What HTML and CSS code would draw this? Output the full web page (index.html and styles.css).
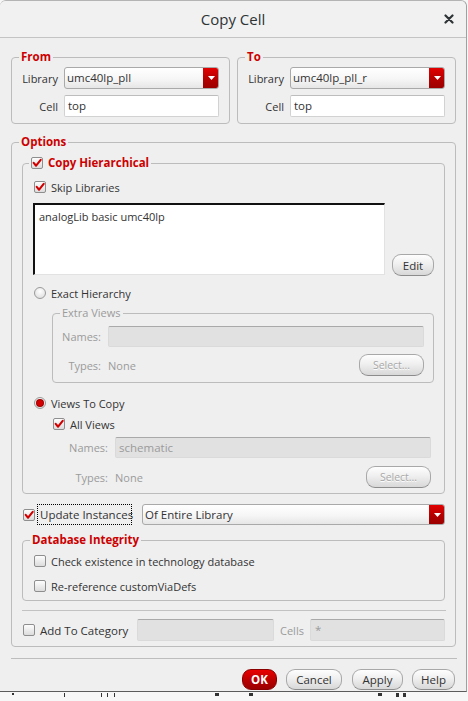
FILE: index.html
```html
<!DOCTYPE html>
<html>
<head>
<meta charset="utf-8">
<title>Copy Cell</title>
<link rel="stylesheet" href="styles.css">
</head>
<body>
<div class="window">
  <header class="titlebar">
    <span></span>
    <span class="title">Copy Cell</span>
    <span class="close"><svg width="10" height="10" viewBox="0 0 10 10"><path d="M1.5 1.5 L8.5 8.5 M8.5 1.5 L1.5 8.5" stroke="#2e3436" stroke-width="2.2" stroke-linecap="round"/></svg></span>
  </header>
  <div class="content">
    <div class="fromto">
      <section class="group">
        <div class="gtitle red">From</div>
        <div class="form">
          <span class="lbl">Library</span>
          <div class="combo"><span class="combo-text">umc40lp_pll</span><span class="combo-btn"><svg width="7" height="4" viewBox="0 0 7 4"><path d="M0 0 H7 L3.5 4 Z" fill="#fff"/></svg></span></div>
          <span class="lbl">Cell</span>
          <div class="field">top</div>
        </div>
      </section>
      <section class="group">
        <div class="gtitle red">To</div>
        <div class="form">
          <span class="lbl">Library</span>
          <div class="combo"><span class="combo-text">umc40lp_pll_r</span><span class="combo-btn"><svg width="7" height="4" viewBox="0 0 7 4"><path d="M0 0 H7 L3.5 4 Z" fill="#fff"/></svg></span></div>
          <span class="lbl">Cell</span>
          <div class="field">top</div>
        </div>
      </section>
    </div>

    <section class="group options">
      <div class="gtitle red">Options</div>
      <div class="options-body">
        <section class="group">
          <div class="gtitle ch-title"><span class="cb"><svg width="10" height="10" viewBox="0 0 10 10"><path d="M1.7 4.9 L4.1 7.7 L8.7 1.9" fill="none" stroke="#d00000" stroke-width="2.1" stroke-linecap="round" stroke-linejoin="round"/></svg></span><span class="red">Copy Hierarchical</span></div>
          <div class="ch-body">
            <div class="row"><span class="cb"><svg width="10" height="10" viewBox="0 0 10 10"><path d="M1.7 4.9 L4.1 7.7 L8.7 1.9" fill="none" stroke="#d00000" stroke-width="2.1" stroke-linecap="round" stroke-linejoin="round"/></svg></span><span>Skip Libraries</span></div>
            <div class="libs">
              <div class="textarea">analogLib basic umc40lp</div>
              <button class="btn edit">Edit</button>
            </div>
            <div class="row radio-row"><span class="radio"></span><span>Exact Hierarchy</span></div>
            <section class="group extra">
              <div class="gtitle gray">Extra Views</div>
              <div class="vgrid extra-grid">
                <span class="lbl gray">Names:</span>
                <div class="field disabled wide"></div>
                <span class="lbl gray">Types:</span>
                <span class="gray">None</span>
                <button class="btn dis">Select...</button>
              </div>
            </section>
            <div class="row views-row"><span class="radio on"></span><span>Views To Copy</span></div>
            <div class="row allviews"><span class="cb"><svg width="10" height="10" viewBox="0 0 10 10"><path d="M1.7 4.9 L4.1 7.7 L8.7 1.9" fill="none" stroke="#d00000" stroke-width="2.1" stroke-linecap="round" stroke-linejoin="round"/></svg></span><span>All Views</span></div>
            <div class="vgrid views-grid">
              <span class="lbl gray">Names:</span>
              <div class="field disabled wide">schematic</div>
              <span class="lbl gray">Types:</span>
              <span class="gray">None</span>
              <button class="btn dis">Select...</button>
            </div>
          </div>
        </section>

        <div class="update">
          <span class="cb"><svg width="10" height="10" viewBox="0 0 10 10"><path d="M1.7 4.9 L4.1 7.7 L8.7 1.9" fill="none" stroke="#d00000" stroke-width="2.1" stroke-linecap="round" stroke-linejoin="round"/></svg></span>
          <span class="focus">Update Instances</span>
          <div class="combo update-combo"><span class="combo-text">Of Entire Library</span><span class="combo-btn"><svg width="7" height="4" viewBox="0 0 7 4"><path d="M0 0 H7 L3.5 4 Z" fill="#fff"/></svg></span></div>
        </div>

        <section class="group db">
          <div class="gtitle red">Database Integrity</div>
          <div class="db-body">
            <div class="row"><span class="cb"></span><span>Check existence in technology database</span></div>
            <div class="row"><span class="cb"></span><span>Re-reference customViaDefs</span></div>
          </div>
        </section>

        <div class="sep"></div>

        <div class="addrow">
          <span class="cb"></span>
          <span class="add-label">Add To Category</span>
          <div class="field disabled cat"></div>
          <span class="gray cells">Cells</span>
          <div class="field disabled cellsfield">*</div>
        </div>
      </div>
    </section>
  </div>

  <div class="sep2"></div>

  <div class="buttons">
    <button class="btn ok">OK</button>
    <button class="btn cancel">Cancel</button>
    <button class="btn apply">Apply</button>
    <button class="btn help">Help</button>
  </div>
</div>
<div class="desktop">
  <i class="m m1"></i><i class="m m2"></i><i class="m m3"></i><i class="m m4"></i><i class="m m5"></i><i class="m m6"></i><i class="m m7"></i><i class="m m8"></i><i class="m m9"></i><i class="m m10"></i>
</div>
</body>
</html>
```

FILE: styles.css
```css
* { box-sizing: border-box; }

body {
  margin: 0;
  width: 468px;
  height: 701px;
  overflow: hidden;
  background: #f6f6f6;
  font-family: "Open Sans", "Noto Sans", sans-serif;
  font-size: 11px;
  color: #333;
}

.window {
  width: 467px;
  background: #efefef;
  border-top: 1px solid #b4b4b4;
  border-right: 1px solid #a0a0a0;
  border-bottom: 1px solid #5c5c5c;
  border-radius: 6px 6px 0 0;
  padding-bottom: 1px;
}

.titlebar {
  height: 37px;
  border-bottom: 1px solid #c4c4c4;
  display: grid;
  grid-template-columns: 1fr auto 1fr;
  align-items: center;
  background: #f1f1f1;
  border-radius: 6px 6px 0 0;
}

.title {
  font-size: 15px;
  color: #2e3436;
}

.close {
  justify-self: end;
  margin-right: 12px;
  display: flex;
}

.content {
  padding: 0 10px 0 11px;
}

.fromto {
  display: flex;
  gap: 7px;
  margin-top: 19px;
}

.fromto .group { flex: 1; }

.group {
  border: 1px solid #bcbcbc;
  border-radius: 4px;
}

.gtitle {
  margin: -9px 0 0 7px;
  padding: 0 2px;
  height: 16px;
  line-height: 16px;
  background: #efefef;
  width: fit-content;
  display: flex;
  align-items: center;
  gap: 5px;
}

.red { color: #cc0000; font-weight: bold; font-size: 11.5px; }
.gray { color: #9b9b9b; }

.form {
  display: grid;
  grid-template-columns: 46px 1fr;
  gap: 6px;
  padding: 2px 10px 6px 0;
  align-items: center;
}

.lbl { text-align: right; }

.combo {
  height: 22px;
  display: flex;
  border: 1px solid #a9a9a9;
  border-radius: 3px;
  background: linear-gradient(#ffffff, #f6f6f6 55%, #e6e6e6);
  overflow: hidden;
}

.combo-text {
  flex: 1;
  padding-left: 2px;
  line-height: 20px;
  white-space: nowrap;
  font-size: 11.5px;
}

.combo-btn {
  width: 16px;
  margin: -1px -1px -1px 0;
  border-radius: 0 3px 3px 0;
  background: linear-gradient(#e60000, #b00000 60%, #9a0000);
  display: flex;
  align-items: center;
  justify-content: center;
}

.field {
  height: 22px;
  border: 1px solid #d2d2d2;
  border-top-color: #bdbdbd;
  border-radius: 2px;
  background: #fff;
  padding-left: 3px;
  line-height: 20px;
  font-size: 11.5px;
}

.field.disabled {
  height: 21px;
  background: #e1e1e1;
  border-color: #dadada;
  border-top-color: #a9a9a9;
  color: #9b9b9b;
  line-height: 19px;
}

.options { margin-top: 18px; }

.options-body {
  padding: 13px 10px 5px 10px;
}

.ch-title { margin-left: 6px; }

.ch-body {
  padding: 8px 10px 5px 10px;
}

.row {
  display: flex;
  align-items: center;
  height: 16px;
  gap: 5px;
}

.row .cb, .row .radio { margin-left: 1px; }

.cb {
  width: 12px;
  height: 12px;
  flex: none;
  border: 1px solid #8e8e8e;
  border-radius: 2px;
  background: linear-gradient(#fdfdfd, #dcdcdc);
  display: flex;
  align-items: center;
  justify-content: center;
}

.radio {
  width: 12px;
  height: 12px;
  flex: none;
  border: 1px solid #9a9a9a;
  border-radius: 50%;
  background: radial-gradient(circle at 50% 35%, #ffffff, #d8d8d8);
  display: flex;
  align-items: center;
  justify-content: center;
}

.radio.on::after {
  content: "";
  width: 6px;
  height: 6px;
  border-radius: 50%;
  background: #d40000;
  box-shadow: 0 0 0 1px #a00000;
}

.libs {
  display: flex;
  align-items: flex-end;
  gap: 7px;
  margin-top: 8px;
}

.textarea {
  width: 352px;
  height: 72px;
  background: #fff;
  border-top: 2px solid #111;
  border-left: 2px solid #111;
  border-right: 1px solid #e2e2e2;
  border-bottom: 1px solid #e2e2e2;
  padding: 4px 4px;
  line-height: 16px;
}

.btn {
  height: 22px;
  border: 1px solid #a8a8a8;
  border-bottom-color: #8c8c8c;
  border-radius: 9px;
  background: linear-gradient(#fefefe, #efefef 45%, #d8d8d8);
  font: inherit;
  font-size: 11.5px;
  color: #333;
  padding: 0;
}

.edit { width: 42px; margin-bottom: -1px; }

.radio-row { margin-top: 10px; }

.extra { margin: 12px 0 0 19px; }

.vgrid {
  display: grid;
  align-items: center;
  column-gap: 7px;
}

.vgrid .wide { grid-column: 2 / 4; }

.extra-grid {
  grid-template-columns: 48px 1fr auto;
  row-gap: 7px;
  padding: 5px 9px 6px 0;
}

.btn.dis {
  width: 65px;
  color: #a8a8a8;
  text-shadow: 0 1px 0 #fff;
  font-size: 10.5px;
}

.views-row { margin-top: 12px; }

.allviews { margin: 5px 0 0 19px; }

.views-grid {
  grid-template-columns: 56px 1fr auto;
  row-gap: 8px;
  margin: 5px 0 0 19px;
  padding-right: 3px;
}

.update {
  display: flex;
  align-items: center;
  height: 21px;
  margin-top: 10px;
}

.update .cb { margin-left: 1px; }

.focus {
  margin-left: 2px;
  width: 95px;
  height: 21px;
  border: 1px dotted #000;
  padding: 0 2px;
  line-height: 19px;
  white-space: nowrap;
  font-size: 11.5px;
}

.update-combo {
  flex: 1;
  height: 21px;
  margin-left: 10px;
}

.update-combo .combo-text { line-height: 19px; }

.db { margin-top: 15px; }
.db .gtitle { margin-left: 7px; }

.db-body {
  padding: 5px 10px 6px 10px;
  display: flex;
  flex-direction: column;
  gap: 9px;
}

.sep {
  height: 1px;
  background: #c2c2c2;
  margin: 9px -1px 0 0;
}

.addrow {
  display: flex;
  align-items: center;
  height: 22px;
  margin-top: 8px;
}

.addrow .cb { margin-left: 1px; }

.add-label {
  margin-left: 5px;
  width: 97px;
  white-space: nowrap;
  font-size: 11.5px;
}

.field.cat {
  width: 137px;
  height: 22px;
}

.cells { margin-left: 6px; }

.field.cellsfield {
  flex: 1;
  height: 22px;
  margin-left: 6px;
  padding-left: 4px;
}

.sep2 {
  height: 1px;
  background: #bdbdbd;
  margin: 11px 9px 0 11px;
}

.buttons {
  display: flex;
  justify-content: flex-end;
  gap: 9px;
  margin-top: 10px;
  padding-right: 11px;
  height: 21px;
}

.buttons .btn { height: 21px; }

.ok {
  width: 35px;
  background: linear-gradient(#ea0000, #b80000 55%, #9c0000);
  border-color: #8a0000;
  color: #fff;
  font-weight: bold;
}

.cancel { width: 56px; }
.apply { width: 51px; margin-left: 1px; }
.help { width: 43px; }

.desktop {
  height: 9px;
  overflow: hidden;
  background: #f7f7f7;
  display: flex;
  align-items: flex-start;
}

.m {
  display: block;
  height: 4px;
  width: 1px;
  background: #333;
  margin-top: 1px;
}

.m1 { margin-left: 12px; width: 2px; height: 2px; }
.m2 { margin-left: 50px; }
.m3 { margin-left: 36px; }
.m4 { margin-left: 5px; }
.m5 { margin-left: 6px; }
.m6 { margin-left: 100px; width: 4px; height: 3px; }
.m7 { margin-left: 30px; width: 4px; height: 3px; }
.m8 { margin-left: 125px; width: 4px; height: 3px; }
.m9 { margin-left: 14px; width: 3px; height: 4px; }
.m10 { margin-left: 4px; width: 3px; height: 4px; }
```
